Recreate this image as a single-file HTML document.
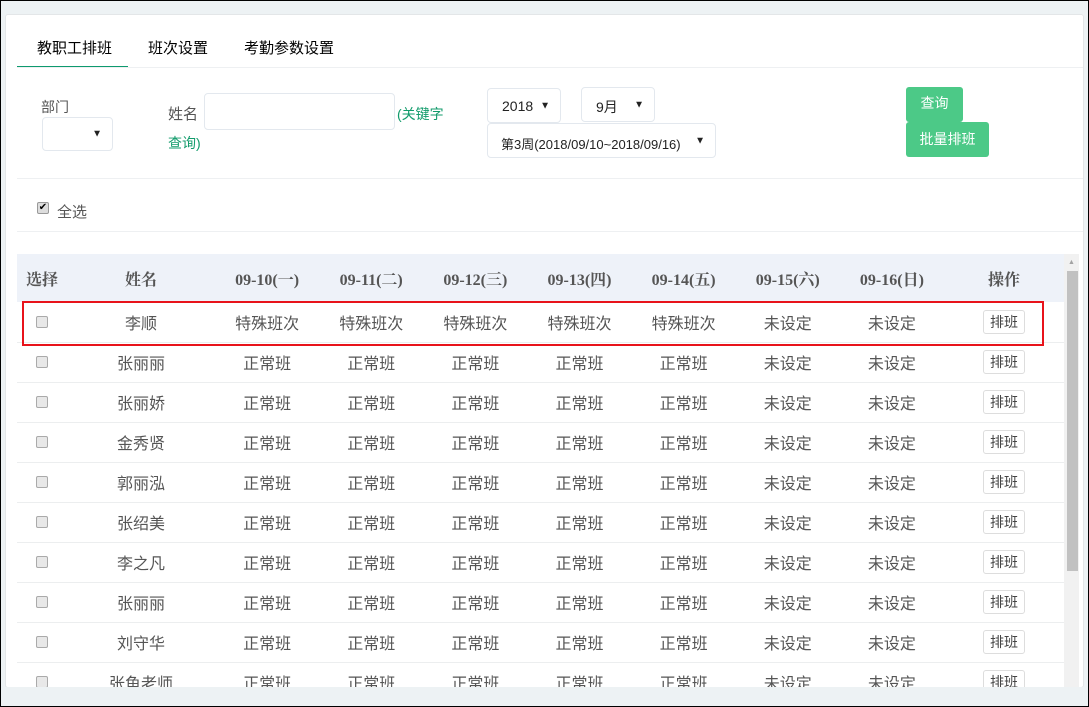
<!DOCTYPE html>
<html><head><meta charset="utf-8"><style>
*{box-sizing:border-box;margin:0;padding:0}
body{width:1089px;height:707px;overflow:hidden;background:#edf2f4;font-family:"Liberation Sans","Noto Sans CJK SC",sans-serif;position:relative;border:1px solid #000}
.panel{position:absolute;left:4px;top:13px;width:1079px;height:674px;background:#fff;border:1px solid #e3e6e8;border-radius:3px;overflow:hidden}
.abs{position:absolute}
.tab{position:absolute;top:22px;font-size:15px;color:#000}
.sel{position:absolute;border:1px solid #e3e8ee;border-radius:4px;background:#fff;font-size:14px;color:#222}
.sel i{position:absolute;font-style:normal;font-size:10px;right:10px;top:50%;transform:translateY(-50%)}
.btn{position:absolute;background:#4cc987;color:#fff;font-size:14px;border-radius:3px;text-align:center}
.hr{position:absolute;left:11px;right:0;height:1px;background:#eef0f2}
table{position:absolute;left:11px;top:239px;width:1047px;border-collapse:collapse;font-size:16px;color:#555}
th{height:48px;background:#eef2f9;font-family:"Liberation Serif","Noto Serif CJK SC",serif;font-weight:bold;color:#555;font-size:16px}
td{height:40px;text-align:center;border-bottom:1px solid #eceeef}
.cb{display:inline-block;width:12px;height:12px;border:1px solid #aaa;border-radius:2px;background:#e8e8e8;vertical-align:middle}
.pb{display:inline-block;border:1px solid #ddd;border-radius:3px;padding:1px 6px;font-size:14px;color:#444}
</style></head><body>
<div class="panel">
 <div class="tab" style="left:31px">教职工排班</div>
 <div class="tab" style="left:142px">班次设置</div>
 <div class="tab" style="left:238px">考勤参数设置</div>
 <div class="abs" style="left:11px;top:51px;width:111px;height:2px;background:#0e9a6e"></div>
 <div class="hr" style="top:52px"></div>
 <div class="abs" style="left:35px;top:82px;font-size:14px;color:#555">部门</div>
 <div class="sel" style="left:36px;top:102px;width:71px;height:34px"><i>▼</i></div>
 <div class="abs" style="left:162px;top:88px;font-size:15px;color:#555">姓名</div>
 <div class="sel" style="left:198px;top:78px;width:191px;height:37px"></div>
 <div class="abs" style="left:391px;top:89px;font-size:14px;color:#119b6b">(关键字</div>
 <div class="abs" style="left:162px;top:118px;font-size:14px;color:#119b6b">查询)</div>
 <div class="sel" style="left:481px;top:73px;width:74px;height:35px;padding:9px 0 0 14px">2018<i>▼</i></div>
 <div class="sel" style="left:575px;top:72px;width:74px;height:35px;padding:9px 0 0 14px">9月<i>▼</i></div>
 <div class="sel" style="left:481px;top:108px;width:229px;height:35px;padding:10px 0 0 13px;font-size:13px">第3周(2018/09/10~2018/09/16)<i>▼</i></div>
 <div class="btn" style="left:900px;top:72px;width:57px;height:35px;line-height:33px">查询</div>
 <div class="btn" style="left:900px;top:107px;width:83px;height:35px;line-height:35px">批量排班</div>
 <div class="hr" style="top:163px"></div>
 <div class="abs" style="left:31px;top:187px;width:12px;height:12px;border:1px solid #999;border-radius:2px;background:#ddd;font-size:10px;line-height:10px;text-align:center">✔</div>
 <div class="abs" style="left:51px;top:186px;font-size:15px;color:#555">全选</div>
 <div class="hr" style="top:216px"></div>
 <table>
  <tr><th style="width:50px">选择</th><th style="width:148px">姓名</th><th>09-10(一)</th><th>09-11(二)</th><th>09-12(三)</th><th>09-13(四)</th><th>09-14(五)</th><th>09-15(六)</th><th>09-16(日)</th><th style="width:120px">操作</th></tr>
  <tr><td><span class="cb"></span></td><td>李顺</td><td>特殊班次</td><td>特殊班次</td><td>特殊班次</td><td>特殊班次</td><td>特殊班次</td><td>未设定</td><td>未设定</td><td><span class="pb">排班</span></td></tr>
  <tr><td><span class="cb"></span></td><td>张丽丽</td><td>正常班</td><td>正常班</td><td>正常班</td><td>正常班</td><td>正常班</td><td>未设定</td><td>未设定</td><td><span class="pb">排班</span></td></tr>
  <tr><td><span class="cb"></span></td><td>张丽娇</td><td>正常班</td><td>正常班</td><td>正常班</td><td>正常班</td><td>正常班</td><td>未设定</td><td>未设定</td><td><span class="pb">排班</span></td></tr>
  <tr><td><span class="cb"></span></td><td>金秀贤</td><td>正常班</td><td>正常班</td><td>正常班</td><td>正常班</td><td>正常班</td><td>未设定</td><td>未设定</td><td><span class="pb">排班</span></td></tr>
  <tr><td><span class="cb"></span></td><td>郭丽泓</td><td>正常班</td><td>正常班</td><td>正常班</td><td>正常班</td><td>正常班</td><td>未设定</td><td>未设定</td><td><span class="pb">排班</span></td></tr>
  <tr><td><span class="cb"></span></td><td>张绍美</td><td>正常班</td><td>正常班</td><td>正常班</td><td>正常班</td><td>正常班</td><td>未设定</td><td>未设定</td><td><span class="pb">排班</span></td></tr>
  <tr><td><span class="cb"></span></td><td>李之凡</td><td>正常班</td><td>正常班</td><td>正常班</td><td>正常班</td><td>正常班</td><td>未设定</td><td>未设定</td><td><span class="pb">排班</span></td></tr>
  <tr><td><span class="cb"></span></td><td>张丽丽</td><td>正常班</td><td>正常班</td><td>正常班</td><td>正常班</td><td>正常班</td><td>未设定</td><td>未设定</td><td><span class="pb">排班</span></td></tr>
  <tr><td><span class="cb"></span></td><td>刘守华</td><td>正常班</td><td>正常班</td><td>正常班</td><td>正常班</td><td>正常班</td><td>未设定</td><td>未设定</td><td><span class="pb">排班</span></td></tr>
  <tr><td><span class="cb"></span></td><td>张鱼老师</td><td>正常班</td><td>正常班</td><td>正常班</td><td>正常班</td><td>正常班</td><td>未设定</td><td>未设定</td><td><span class="pb">排班</span></td></tr>
 </table>
 <div class="abs" style="left:16px;top:286px;width:1022px;height:45px;border:2px solid #e8131b"></div>
 <div class="abs" style="left:1058px;top:239px;width:15px;height:440px;background:#f1f1f1"></div>
 <div class="abs" style="left:1061px;top:256px;width:11px;height:300px;background:#c1c1c1"></div>
 <div class="abs" style="left:1062px;top:244px;font-size:7px;color:#a3a3a3">▲</div>
</div>
<div class="abs" style="left:0;top:686px;width:1087px;height:19px;background:#edf2f4"></div>
</body></html>
